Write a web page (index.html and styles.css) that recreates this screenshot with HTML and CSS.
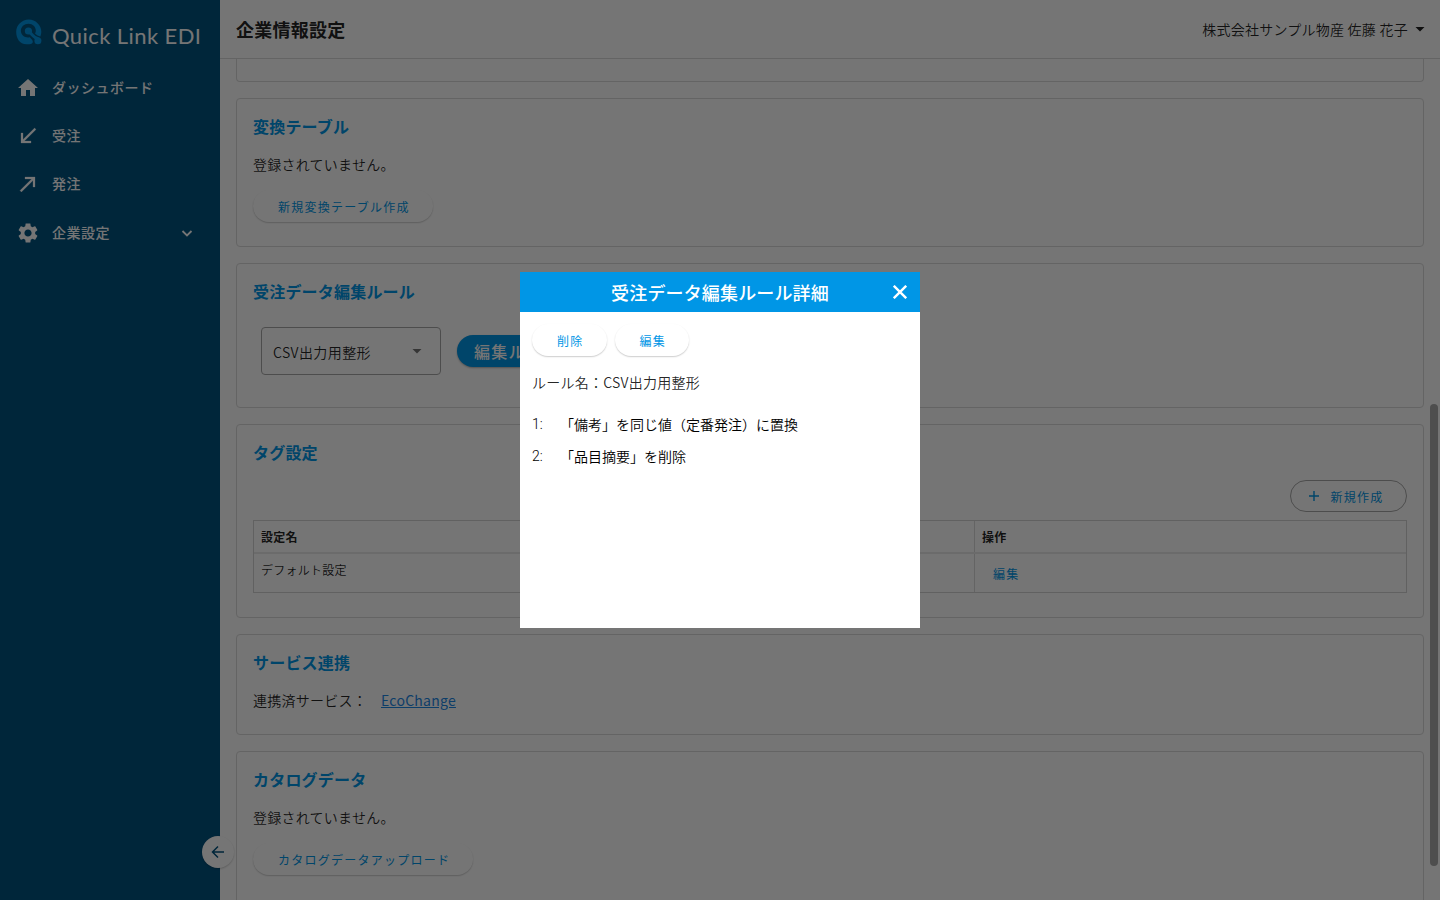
FILE: index.html
```html
<!DOCTYPE html>
<html lang="ja">
<head>
<meta charset="utf-8">
<title>企業情報設定 - Quick Link EDI</title>
<link rel="stylesheet" href="styles.css">
</head>
<body>
<div class="app">
  <nav class="sidebar">
    <div class="logo">
      <svg class="logo-mark" viewBox="0 0 26 26">
        <path class="blue" d="M12.800 .4C5.800 .4 .2 6 .2 12.800C.2 19.500 3.500 25.200 10.500 25.200H13.500C16.800 25.200 17.600 22.800 16 20.800L13.800 18.300C9.200 19.300 5.200 16.400 4.900 12.300C4.600 7.800 8.300 4.700 12.500 4.700C16.800 4.700 19.800 7.800 19.800 11.500C19.800 13 19.400 13.800 19 14.600C20.500 16.200 22.500 17.300 24.300 17.500C25 15.800 25.300 14.500 25.300 12.600C25.300 6 19.500 .4 12.800 .4Z"/>
        <circle class="blue" cx="12.400" cy="12" r="3.600"/>
        <path class="stem" d="M13 12.600L16.800 16.500Q18.500 18.500 21.500 19.500"/>
        <circle class="blue" cx="21.900" cy="21.800" r="3.500"/>
      </svg>
      <svg class="logo-text" viewBox="0 0 150 26"><text x="0" y="20" textLength="149">Quick Link EDI</text></svg>
    </div>
    <a class="nav-item"><svg viewBox="0 0 24 24"><path d="M10 20v-6h4v6h5v-8h3L12 3 2 12h3v8z"/></svg><span>ダッシュボード</span></a>
    <a class="nav-item arrow"><svg viewBox="0 0 24 24"><path d="M20 5.410 18.590 4 7 15.590V9H5v10h10v-2H8.410z"/></svg><span>受注</span></a>
    <a class="nav-item arrow"><svg viewBox="0 0 24 24"><path d="M9 5v2h6.590L4 18.590 5.410 20 17 8.410V15h2V5z"/></svg><span>発注</span></a>
    <a class="nav-item last"><svg viewBox="0 0 24 24"><path d="M19.140 12.940c.04-.3.06-.61.06-.94 0-.32-.02-.64-.07-.94l2.030-1.580c.18-.14.23-.41.12-.61l-1.920-3.320c-.12-.22-.37-.29-.59-.22l-2.390.96c-.5-.38-1.030-.7-1.620-.94l-.36-2.540c-.04-.24-.24-.41-.48-.41h-3.840c-.24 0-.43.17-.47.41l-.36 2.540c-.59.24-1.130.57-1.620.94l-2.390-.96c-.22-.08-.47 0-.59.22L2.740 8.870c-.12.21-.08.47.12.61l2.030 1.580c-.05.3-.09.63-.09.94s.02.64.07.94l-2.030 1.580c-.18.14-.23.41-.12.61l1.920 3.320c.12.22.37.29.59.22l2.390-.96c.5.38 1.030.7 1.620.94l.36 2.540c.05.24.24.41.48.41h3.840c.24 0 .44-.17.47-.41l.36-2.540c.59-.24 1.130-.56 1.620-.94l2.390.96c.22.08.47 0 .59-.22l1.920-3.320c.12-.22.07-.47-.12-.61zM12 15.600c-1.980 0-3.600-1.620-3.600-3.600s1.620-3.600 3.600-3.600 3.600 1.620 3.600 3.600-1.620 3.600-3.600 3.600z"/></svg><span>企業設定</span>
      <svg class="chev" viewBox="0 0 12 12"><path d="M1.500 4 6 8.500 10.500 4"/></svg></a>
  </nav>

  <div class="page">
    <header class="topbar">
      <h1>企業情報設定</h1>
      <div class="user"><span>株式会社サンプル物産 佐藤 花子</span><i class="caret dark"></i></div>
    </header>
    <main class="content">
      <section class="card stub"></section>
      <section class="card convert">
        <h2>変換テーブル</h2>
        <p>登録されていません。</p>
        <button class="btn raised">新規変換テーブル作成</button>
      </section>
      <section class="card rules">
        <h2>受注データ編集ルール</h2>
        <div class="rule-row">
          <div class="select"><span>CSV出力用整形</span><i class="caret"></i></div>
          <button class="btn primary">編集ル</button>
        </div>
      </section>
      <section class="card tags">
        <h2>タグ設定</h2>
        <div class="actions"><button class="btn outlined"><svg viewBox="0 0 10 10"><path d="M5 0v10M0 5h10"/></svg>新規作成</button></div>
        <div class="table">
          <div class="row head"><div class="cell name">設定名</div><div class="cell">操作</div></div>
          <div class="row"><div class="cell name">デフォルト設定</div><div class="cell op"><a>編集</a></div></div>
        </div>
      </section>
      <section class="card service">
        <h2>サービス連携</h2>
        <p>連携済サービス：<a>EcoChange</a></p>
      </section>
      <section class="card catalog">
        <h2>カタログデータ</h2>
        <p>登録されていません。</p>
        <button class="btn raised">カタログデータアップロード</button>
      </section>
    </main>
  </div>
  <div class="collapse"><svg viewBox="0 0 16 16"><path d="M14 8H3M8 2.500 2.500 8 8 13.500"/></svg></div>
  <div class="scroll-thumb"></div>
</div>

<div class="overlay">
  <div class="modal">
    <div class="modal-head"><h3>受注データ編集ルール詳細</h3><svg viewBox="0 0 14 14"><path d="M.8 .8 13.200 13.200M13.200 .8 .8 13.200"/></svg></div>
    <div class="modal-body">
      <div class="modal-btns"><button class="btn raised">削除</button><button class="btn raised">編集</button></div>
      <p>ルール名：CSV出力用整形</p>
      <div class="rule"><span class="num">1:</span><span>「備考」を同じ値（定番発注）に置換</span></div>
      <div class="rule"><span class="num">2:</span><span>「品目摘要」を削除</span></div>
    </div>
  </div>
</div>
</body>
</html>
```
FILE: styles.css
```css
* { box-sizing: border-box; }
body {
  margin: 0;
  height: 900px;
  overflow: hidden;
  background: #fff;
  color: rgba(0, 0, 0, .87);
  font: 350 14px/20px "Noto Sans CJK JP", sans-serif;
  letter-spacing: .25px;
}
h1, h2, h3, p { margin: 0; }
svg { display: block; flex: none; }
.app { position: relative; display: flex; height: 900px; overflow: hidden; }

.sidebar { width: 220px; flex: none; background: #00537f; color: #fff; }
.logo { display: flex; height: 64px; padding: 19px 0 0 16px; }
.logo-mark { width: 26px; height: 26px; }
.logo-mark .blue { fill: #0096e6; }
.logo-mark .stem { fill: none; stroke: #0096e6; stroke-width: 3; stroke-linecap: round; }
.logo-text { width: 150px; height: 26px; margin: 5px 0 0 10px; overflow: visible; }
.logo-text text { fill: #fff; font: 400 22px Lato, sans-serif; letter-spacing: 0; }
.nav-item {
  display: flex;
  align-items: center;
  height: 48px;
  padding: 0 16px;
  font-weight: 500;
  letter-spacing: .5px;
}
.nav-item span { padding-bottom: 2px; }
.nav-item svg { width: 24px; height: 24px; margin-right: 12px; fill: currentColor; }
.nav-item.arrow svg { stroke: currentColor; stroke-width: .25; }
.nav-item.last { height: 49px; }
.nav-item .chev { width: 12px; height: 12px; margin: 0 11.500px 0 auto; fill: none; stroke: currentColor; stroke-width: 1.800; }

.page { flex: 1; min-width: 0; display: flex; flex-direction: column; }
.topbar {
  display: flex;
  align-items: center;
  justify-content: space-between;
  flex: none;
  height: 59px;
  padding: 0 15px 0 16px;
  border-bottom: 1px solid #dadada;
}
.topbar h1 { font-size: 18px; font-weight: 700; line-height: 28px; letter-spacing: .25px; }
.user { display: flex; align-items: center; }
.user span { padding-bottom: 1px; }
.caret { width: 10px; height: 5px; background: #757575; clip-path: polygon(0 0, 100% 0, 50% 100%); }
.caret.dark { margin-left: 7px; background: #212121; }

.content { flex: 1; display: flex; flex-direction: column; gap: 16px; padding: 0 16px; overflow: hidden; }
.card { flex: none; border: 1px solid #dadada; border-radius: 4px; padding: 15px 16px; }
.card h2 { font-size: 16px; font-weight: 700; line-height: 24px; letter-spacing: .2px; color: #0096e6; }
.card p { margin-top: 16px; }
.card.stub { height: 23px; padding: 0; border-top: 0; border-radius: 0 0 4px 4px; }
.convert { height: 149px; }
.rules { height: 145px; }
.tags { height: 194px; }
.service { height: 101px; }
.catalog { height: 160px; }

.btn {
  display: inline-flex;
  align-items: center;
  justify-content: center;
  height: 32px;
  border: 0;
  border-radius: 16px;
  padding: 1px 23px 0 25px;
  background: #fff;
  color: #0096e6;
  font: 400 12px/31px "Noto Sans CJK JP", sans-serif;
  letter-spacing: 1.25px;
  white-space: nowrap;
}
.raised { box-shadow: 0 1px 1.500px rgba(0, 0, 0, .2); }
.card .raised { margin-top: 16px; }
.primary { justify-content: flex-start; width: 151px; padding: 0 16px 0 17px; background: #0096e6; color: #fff; font-size: 16px; font-weight: 500; box-shadow: 0 1px 2px rgba(0, 0, 0, .3); }
.outlined { border: 1px solid #a8a8a8; padding: 1px 22.500px 0 18px; }
.outlined svg { width: 10px; height: 10px; margin: -1px 11.500px 0 0; stroke: currentColor; stroke-width: 1.400; }

.rule-row { display: flex; align-items: center; gap: 16px; margin-top: 24px; padding-left: 8px; }
.select {
  display: flex;
  align-items: center;
  justify-content: space-between;
  width: 180px;
  height: 48px;
  padding: 2px 18px 0 11px;
  border: 1px solid #a8a8a8;
  border-radius: 4px;
  letter-spacing: .4px;
}
.select .caret { margin-top: -2px; }

.actions { display: flex; justify-content: flex-end; margin-top: 16px; }
.table { margin-top: 8px; border: 1px solid #d4d4d4; font-size: 12px; }
.row { display: flex; height: 38px; }
.row.head { height: 33px; border-bottom: 2px solid #eaeaea; font-weight: 700; letter-spacing: .2px; }
.cell { flex: 1; padding: 6px 7px; }
.cell.name { flex: 0 0 721px; border-right: 1px solid #dadada; }
.cell.op { padding: 10px 18px; color: #0096e6; font-weight: 400; letter-spacing: 1.25px; }
.service a { margin-left: 14px; color: #1e88e5; font-weight: 400; text-decoration: underline; }

.collapse {
  position: absolute;
  left: 202px;
  top: 836px;
  display: flex;
  align-items: center;
  justify-content: center;
  width: 32px;
  height: 32px;
  border-radius: 50%;
  background: #fff;
  box-shadow: 0 1px 2px rgba(0, 0, 0, .2);
}
.collapse svg { width: 16px; height: 16px; fill: none; stroke: #00537f; stroke-width: 1.500; }
.scroll-thumb { position: absolute; left: 1430px; top: 404px; width: 8px; height: 462px; border-radius: 4px; background: #aaa; }

.overlay {
  position: absolute;
  inset: 0;
  display: flex;
  align-items: center;
  justify-content: center;
  background: rgba(0, 0, 0, .54);
}
.modal { width: 400px; height: 356px; background: #fff; }
.modal-head { display: grid; grid-template-columns: 27px 1fr 27px; align-items: center; height: 40px; background: #0096e6; color: #fff; }
.modal-head h3 { grid-column: 2; text-align: center; font-size: 18px; font-weight: 500; line-height: 28px; letter-spacing: .15px; }
.modal-head svg { width: 14px; height: 14px; stroke: #fff; stroke-width: 2.400; }
.modal-body { padding: 12px; }
.modal-btns { display: flex; gap: 8px; margin-bottom: 16px; }
.rule { display: flex; height: 32px; color: #000; letter-spacing: 0; }
.rule:nth-of-type(2) { margin-top: 22px; }
.num { width: 28px; font-family: Roboto, sans-serif; font-weight: 350; }
```
